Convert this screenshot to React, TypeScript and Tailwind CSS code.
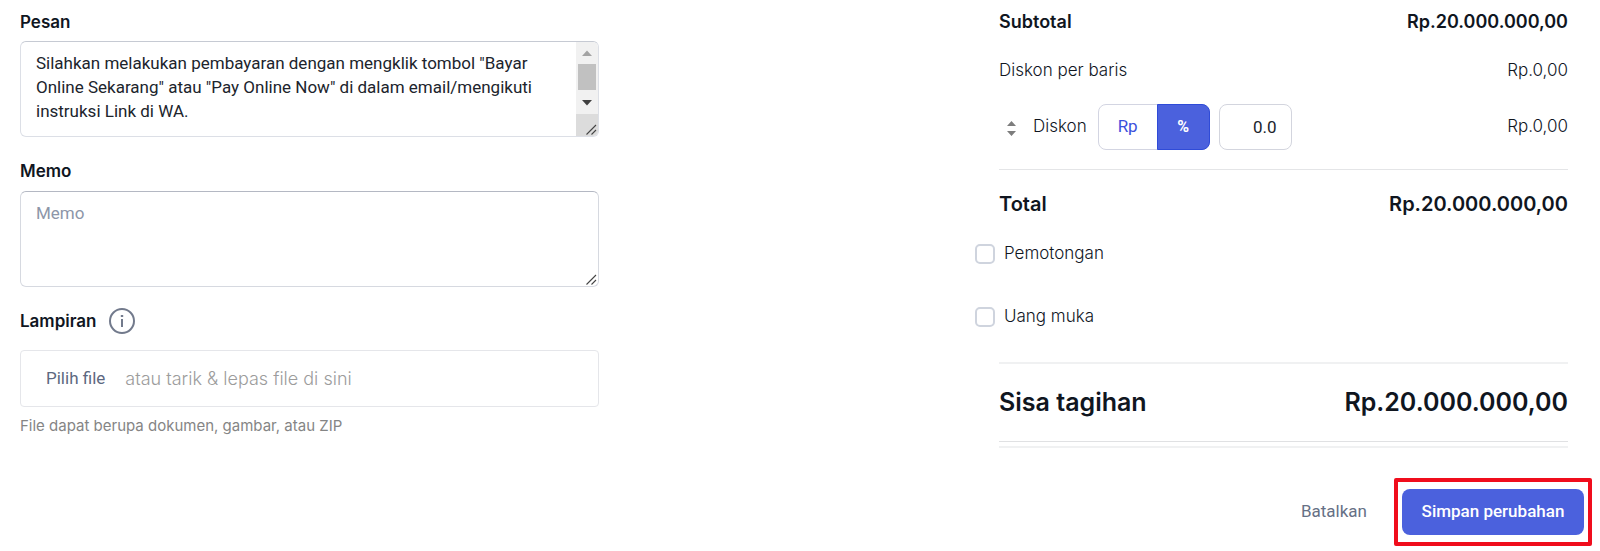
import { useState } from 'react';

const inter = "font-['Inter',sans-serif]";
const roboto = "font-['Roboto',sans-serif]";

const message =
  'Silahkan melakukan pembayaran dengan mengklik tombol "Bayar Online Sekarang" atau "Pay Online Now" di dalam email/mengikuti instruksi Link di WA.';

function Grip() {
  return (
    <svg aria-hidden="true" className="pointer-events-none absolute right-[2px] bottom-[2px] size-[11px]" viewBox="0 0 11 11" stroke="#444" strokeWidth="1.1">
      <path d="M0.5 10.5 L10 1 M5.5 10.5 L10 6" />
    </svg>
  );
}

function ScrollTrack() {
  return (
    <div aria-hidden="true" className="pointer-events-none absolute top-px right-px bottom-px flex w-[22px] flex-col overflow-hidden rounded-r-[5px] bg-[#f1f1f1]">
      <svg className="h-[22px] w-full" viewBox="0 0 22 22">
        <path d="M6 14 L11 8.5 L16 14 Z" fill="#a3a3a3" />
      </svg>
      <div className="mx-[2px] h-[26px] bg-[#c1c1c1]" />
      <svg className="h-[24px] w-full" viewBox="0 0 22 24">
        <path d="M6 10 L11 15.500 L16 10 Z" fill="#404040" />
      </svg>
      <div className="flex-1 bg-[#dcdcdc]" />
    </div>
  );
}

function Check({ id, label }: { id: string; label: string }) {
  return (
    <div className="flex h-6 items-center gap-[9px]">
      <input id={id} type="checkbox" className="size-5 appearance-none rounded-[5px] border-2 border-[#cfd4de] bg-white checked:border-[#4b61dd] checked:bg-[#4b61dd]" />
      <label htmlFor={id} className="text-[17px] font-light">{label}</label>
    </div>
  );
}

export default function App() {
  const [unit, setUnit] = useState('%');
  const on = 'border-[#2f4bd8] bg-[#4b61dd] font-bold text-white';
  const off = 'border-transparent font-normal text-[#3c50dc]';
  return (
    <main className={`${inter} grid grid-cols-[579fr_376fr_593fr] bg-white pt-[10px] pr-8 pl-5 text-[#10161f]`}>
      <section>
        <label htmlFor="pesan" className="block h-[31px] text-[17px] leading-6 font-semibold">Pesan</label>
        <div className="relative h-24">
          <textarea
            id="pesan"
            defaultValue={message}
            className={`${roboto} block size-full resize-none overflow-hidden rounded-md border border-[#dcdfe6] border-t-[#c6cad3] py-[9px] pr-[38px] pl-[15px] text-[17px] leading-6 text-[#20242c]`}
          />
          <ScrollTrack />
          <Grip />
        </div>
        <label htmlFor="memo" className="mt-[22px] block h-8 text-[17px] leading-6 font-semibold">Memo</label>
        <div className="relative h-24">
          <textarea
            id="memo"
            placeholder="Memo"
            className={`${roboto} block size-full resize-none overflow-hidden rounded-md border border-[#d6d9e0] border-t-[#b4b8c3] py-[9px] pr-[15px] pl-[15px] text-[17px] leading-6 placeholder:text-[#8d96a8]`}
          />
          <Grip />
        </div>
        <div className="mt-[20px] flex h-7 items-center gap-3">
          <label htmlFor="lampiran" className="text-[17px] leading-6 font-semibold">Lampiran</label>
          <svg aria-hidden="true" className="size-[26px]" viewBox="0 0 26 26" fill="none" stroke="#727a8c">
            <circle cx="13" cy="13" r="12" strokeWidth="2" />
            <path d="M13 11 V19" strokeWidth="2" />
            <path d="M13 7 V9" strokeWidth="2.400" />
          </svg>
        </div>
        <div className="mt-[15px] flex h-[57px] items-center gap-5 rounded border border-[#e5e6ea] px-[25px] text-[17px]">
          <label htmlFor="lampiran" className={`${roboto} text-[#5d6880]`}>Pilih file</label>
          <input id="lampiran" type="file" className="sr-only" />
          <span className="text-[18px] font-light text-[#9c9c9c]">atau tarik &amp; lepas file di sini</span>
        </div>
        <p className="mt-[9px] text-[15px] leading-5 font-normal text-[#858585]">File dapat berupa dokumen, gambar, atau ZIP</p>
      </section>

      <section className="col-start-3">
        <div className="pl-6">
          <div className="flex justify-between text-[18px] leading-6 font-semibold">
            <span>Subtotal</span>
            <span>Rp.20.000.000,00</span>
          </div>
          <div className="mt-6 flex justify-between text-[17px] leading-6 font-light">
            <span>Diskon per baris</span>
            <span>Rp.0,00</span>
          </div>
          <div className="mt-[22px] flex h-[46px] items-center text-[17px] font-light">
            <button type="button" aria-label="Urutkan" className="ml-[7px] h-[16px] w-[11px]">
              <svg viewBox="0 0 11 16" className="mt-px h-[16px] w-[11px]" fill="#7d7d7d">
                <path d="M1 6 L5.500 1 L10 6 Z M1 11 L5.500 16 L10 11 Z" />
              </svg>
            </button>
            <label htmlFor="diskon" className="ml-4">Diskon</label>
            <div className={`${roboto} ml-[11px] flex h-full w-28 rounded-lg border border-[#d3d5e2]`}>
              <button type="button" aria-pressed={unit === 'Rp'} onClick={() => setUnit('Rp')} className={`flex-1 rounded-l-lg text-[17px] ${unit === 'Rp' ? on : off}`}>Rp</button>
              <button type="button" aria-pressed={unit === '%'} onClick={() => setUnit('%')} className={`-my-px -mr-px w-[53px] rounded-r-lg border text-[16px] ${unit === '%' ? on : off}`}>%</button>
            </div>
            <input id="diskon" type="text" defaultValue="0.0" className={`${roboto} ml-[9px] h-full w-[73px] rounded-lg border border-[#d3d5de] px-[14px] text-right text-[17px] font-normal text-[#20242c]`} />
            <span className="ml-auto">Rp.0,00</span>
          </div>
          <hr className="mt-[19px] border-[#e4e5e7]" />
          <div className="mt-[20px] flex justify-between text-[20px] leading-7 font-semibold">
            <span>Total</span>
            <span>Rp.20.000.000,00</span>
          </div>
        </div>
        <div className="mt-6 flex flex-col gap-[39px]">
          <Check id="pemotongan" label="Pemotongan" />
          <Check id="uang-muka" label="Uang muka" />
        </div>
        <div className="pl-6">
          <hr className="mt-[33px] border-t-2 border-[#f0f1f2]" />
          <div className="mt-[22px] flex justify-between text-[25px] leading-8 font-semibold">
            <span>Sisa tagihan</span>
            <span>Rp.20.000.000,00</span>
          </div>
          <div className="mt-[23px] h-[7px] border-t border-b-2 border-t-[#e0e1e3] border-b-[#f0f1f2]" />
        </div>
        <div className={`${roboto} mt-[30px] -mr-6 flex items-center justify-end gap-[27px] text-[17px]`}>
          <button type="button" className="text-[#667085]">Batalkan</button>
          <div className="rounded-[2px] border-4 border-[#f00d1c] px-1 py-[7px]">
            <button type="button" className="block h-[46px] w-[182px] rounded-lg bg-[#4b61dd] font-medium text-white">Simpan perubahan</button>
          </div>
        </div>
      </section>
    </main>
  );
}
